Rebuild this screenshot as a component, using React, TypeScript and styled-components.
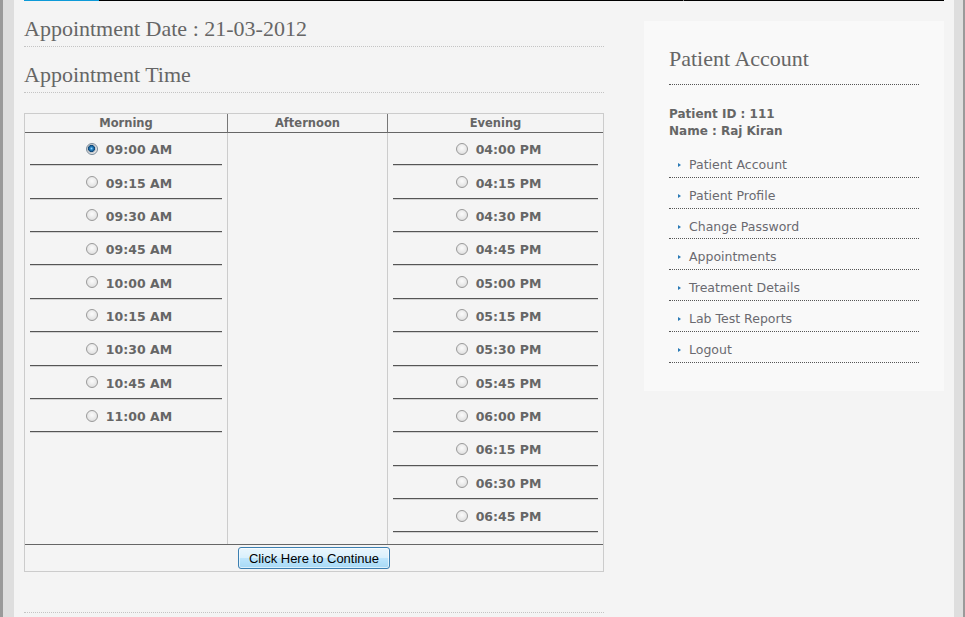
import React from "react";
import styled, { createGlobalStyle } from "styled-components";

const Global = createGlobalStyle`
  html, body { margin: 0; padding: 0; }
  body { background: #f4f4f4; font-family: "DejaVu Sans", Verdana, sans-serif; }
  * { box-sizing: border-box; }
`;

const Page = styled.div`
  display: flex;
  min-height: 617px;
  width: 965px;
`;

const EdgeLeft = styled.div`
  width: 14px;
  flex: none;
  background: linear-gradient(to right, #9a9a9a 0 3px, #dedede 3px);
`;

const EdgeRight = styled.div`
  width: 11px;
  flex: none;
  background: linear-gradient(to right, #dedede 0 9px, #9a9a9a 9px);
`;

const Main = styled.div`
  width: 940px;
  flex: none;
  background: #f4f4f4;
  padding: 0 10px;
`;

const TopRule = styled.div`
  height: 1px;
  background: linear-gradient(to right, #0d9ad8 0 75px, #000 75px 659px, #777 659px 660px, #000 660px);
`;

const Columns = styled.div`
  display: flex;
  align-items: flex-start;
  gap: 40px;
`;

const LeftCol = styled.div`
  width: 580px;
  flex: none;
`;

const Heading = styled.h2`
  margin: 15px 0 0;
  font-family: "Liberation Serif", "Times New Roman", serif;
  font-weight: normal;
  font-size: 22px;
  line-height: 26px;
  color: #666;
  padding-bottom: 4px;
  border-bottom: 1px dotted #c4c4c4;
`;

const Table = styled.div`
  margin-top: 20px;
  border: 1px solid #cccccc;
  display: grid;
  grid-template-columns: 202px 160px 1fr;
`;

const HeadCell = styled.div<{ $divider?: boolean }>`
  height: 19px;
  border-bottom: 1px solid #666;
  border-left: ${(p) => (p.$divider ? "1px solid #777" : "none")};
  text-align: center;
  font-size: 11.5px;
  font-weight: bold;
  line-height: 18px;
  color: #666;
`;

const BodyCell = styled.div<{ $divider?: boolean }>`
  border-left: ${(p) => (p.$divider ? "1px solid #cccccc" : "none")};
  padding: 0 5px 11px;
  display: flex;
  flex-direction: column;
`;

const Slot = styled.label`
  height: 32.36px;
  margin-bottom: 1px;
  padding: 2px 0 0 6px;
  border-bottom: 1px solid #555;
  box-shadow: 0 1px 0 #d2d2d2;
  display: flex;
  align-items: center;
  justify-content: center;
  font-size: 12.5px;
  font-weight: bold;
  color: #666;
`;

const Radio = styled.input.attrs({ type: "radio" })`
  appearance: none;
  -webkit-appearance: none;
  width: 12px;
  height: 12px;
  margin: 0 8px 2px 0;
  border-radius: 50%;
  border: 1px solid #9a9a9a;
  background: radial-gradient(circle at 50% 40%, #fbfbfb 0, #e6e6e6 60%, #d0d0d0 100%);
  &:checked {
    border-color: #7a8a99;
    background: radial-gradient(circle at 45% 45%, #9ad8ff 0, #2b86c6 1.4px, #0d4677 3.2px, #b9bec4 3.8px, #e4e4e4 5px, #f4f4f4 100%);
  }
`;

const FootCell = styled.div`
  grid-column: 1 / -1;
  border-top: 1px solid #666;
  height: 27px;
  display: flex;
  align-items: center;
  justify-content: center;
`;

const Button = styled.button`
  height: 22px;
  padding: 0 10px;
  font-family: "Liberation Sans", Arial, sans-serif;
  font-size: 13px;
  color: #000;
  border: 1px solid #3c7fb1;
  border-radius: 3px;
  background: linear-gradient(#eaf6fd 0%, #d9f0fc 50%, #bee6fd 50%, #a7d9f5 100%);
  box-shadow: inset 0 0 0 1px rgba(255, 255, 255, 0.6);
  cursor: pointer;
`;

const BottomRule = styled.div`
  margin-top: 40px;
  border-top: 1px dotted #c4c4c4;
`;

const Sidebar = styled.aside`
  width: 300px;
  flex: none;
  margin-top: 20px;
  background: #f9f9f9;
  padding: 25px 25px 28px;
`;

const SideHeading = styled.h3`
  margin: 0;
  font-family: "Liberation Serif", "Times New Roman", serif;
  font-weight: normal;
  font-size: 22px;
  line-height: 26px;
  color: #666;
  padding-bottom: 12px;
  border-bottom: 1px dotted #555;
`;

const Info = styled.div`
  margin-top: 21px;
  font-size: 12px;
  font-weight: bold;
  line-height: 17px;
  color: #666;
`;

const Menu = styled.ul`
  list-style: none;
  margin: 7px 0 0;
  padding: 0;
`;

const MenuItem = styled.li`
  display: flex;
  align-items: center;
  gap: 8px;
  padding: 9px 0 3.8px 9px;
  line-height: 17px;
  font-size: 12.5px;
  color: #6a6a70;
  border-bottom: 1px dotted #555;
`;

const Arrow = styled.span`
  width: 0;
  height: 0;
  border-top: 2.5px solid transparent;
  border-bottom: 2.5px solid transparent;
  border-left: 3px solid #2a7ab5;
  margin-top: 1px;
`;

const morning = ["09:00 AM", "09:15 AM", "09:30 AM", "09:45 AM", "10:00 AM", "10:15 AM", "10:30 AM", "10:45 AM", "11:00 AM"];
const evening = ["04:00 PM", "04:15 PM", "04:30 PM", "04:45 PM", "05:00 PM", "05:15 PM", "05:30 PM", "05:45 PM", "06:00 PM", "06:15 PM", "06:30 PM", "06:45 PM"];
const menu = ["Patient Account", "Patient Profile", "Change Password", "Appointments", "Treatment Details", "Lab Test Reports", "Logout"];

export default function App() {
  const [selected, setSelected] = React.useState("09:00 AM");
  return (
    <>
      <Global />
      <Page>
        <EdgeLeft />
        <Main>
          <TopRule />
          <Columns>
            <LeftCol>
              <Heading>Appointment Date : 21-03-2012</Heading>
              <Heading>Appointment Time</Heading>
              <Table>
                <HeadCell>Morning</HeadCell>
                <HeadCell $divider>Afternoon</HeadCell>
                <HeadCell $divider>Evening</HeadCell>
                <BodyCell>
                  {morning.map((t) => (
                    <Slot key={t}>
                      <Radio name="slot" checked={selected === t} onChange={() => setSelected(t)} />
                      {t}
                    </Slot>
                  ))}
                </BodyCell>
                <BodyCell $divider />
                <BodyCell $divider>
                  {evening.map((t) => (
                    <Slot key={t}>
                      <Radio name="slot" checked={selected === t} onChange={() => setSelected(t)} />
                      {t}
                    </Slot>
                  ))}
                </BodyCell>
                <FootCell>
                  <Button type="button">Click Here to Continue</Button>
                </FootCell>
              </Table>
              <BottomRule />
            </LeftCol>
            <Sidebar>
              <SideHeading>Patient Account</SideHeading>
              <Info>
                Patient ID : 111
                <br />
                Name : Raj Kiran
              </Info>
              <Menu>
                {menu.map((m) => (
                  <MenuItem key={m}>
                    <Arrow />
                    {m}
                  </MenuItem>
                ))}
              </Menu>
            </Sidebar>
          </Columns>
        </Main>
        <EdgeRight />
      </Page>
    </>
  );
}
